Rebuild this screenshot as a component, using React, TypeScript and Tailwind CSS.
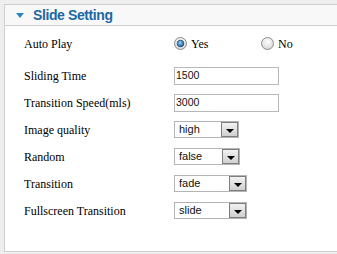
import React from "react";

const serif = { fontFamily: '"Liberation Serif", "Times New Roman", serif' };
const sans = { fontFamily: '"Liberation Sans", Arial, sans-serif' };

function Radio({ checked }: { checked?: boolean }) {
  return (
    <svg width="13" height="13" viewBox="0 0 13 13" className="shrink-0">
      <defs>
        <radialGradient id="ring" cx="50%" cy="35%" r="70%">
          <stop offset="0%" stopColor="#ffffff" />
          <stop offset="100%" stopColor="#d2d2d2" />
        </radialGradient>
        <radialGradient id="dot" cx="40%" cy="35%" r="70%">
          <stop offset="0%" stopColor="#8fd0f5" />
          <stop offset="100%" stopColor="#1a5d98" />
        </radialGradient>
      </defs>
      <circle cx="6.5" cy="6.5" r="6" fill="url(#ring)" stroke="#8c8c8c" />
      {checked && <circle cx="6.5" cy="6.5" r="3.3" fill="url(#dot)" stroke="#1f3f66" strokeWidth="0.8" />}
    </svg>
  );
}

function TextBox({ value }: { value: string }) {
  return (
    <div
      className="w-[105px] h-[18px] border border-[#b8b8b8] bg-white flex items-center pl-[1px] text-[10.5px] text-[#111]"
      style={sans}
    >
      {value}
    </div>
  );
}

function Select({ value, width }: { value: string; width: string }) {
  return (
    <div
      className={`${width} h-[17px] border border-[#b4b4b4] bg-white flex items-stretch text-[11px] text-[#111]`}
      style={sans}
    >
      <div className="flex-1 flex items-center pl-[4px]">{value}</div>
      <div className="w-[17px] border border-[#7e7e7e] bg-gradient-to-b from-[#f2f2f2] to-[#d0d0d0] flex items-end justify-center pb-[3px]">
        <div className="w-0 h-0 border-l-[4px] border-r-[4px] border-t-[4px] border-l-transparent border-r-transparent border-t-black" />
      </div>
    </div>
  );
}

function Row({ label, children, first }: { label: string; children: React.ReactNode; first?: boolean }) {
  return (
    <div className={`flex items-center h-[27px] ${first ? "mb-[5px]" : ""}`}>
      <div className="w-[150px] text-[12px] text-black" style={serif}>
        {label}
      </div>
      <div className="flex items-center">{children}</div>
    </div>
  );
}

export default function App() {
  return (
    <div className="w-[337px] h-[254px] bg-[#eeeeee] pt-[4px] pl-[4px] overflow-hidden">
      <div className="h-[248px] bg-white border-l border-t border-b border-[#cfcfcf]">
        <div className="h-[21px] bg-[#f8f8f8] border-b border-[#cfcfcf] flex items-center pl-[11px]">
          <div className="w-0 h-0 border-l-[4px] border-r-[4px] border-t-[5px] border-l-transparent border-r-transparent border-t-[#2a86c2] mr-[9px] mt-[1px]" />
          <span className="text-[14px] font-bold tracking-[-0.4px] text-[#1d68a3]" style={sans}>
            Slide Setting
          </span>
        </div>
        <div className="pl-[19px] pt-[4px]">
          <Row label="Auto Play" first>
            <div className="flex items-center w-[87px]">
              <Radio checked />
              <span className="ml-[4px] text-[12px]" style={serif}>Yes</span>
            </div>
            <div className="flex items-center">
              <Radio />
              <span className="ml-[4px] text-[12px]" style={serif}>No</span>
            </div>
          </Row>
          <Row label="Sliding Time">
            <TextBox value="1500" />
          </Row>
          <Row label="Transition Speed(mls)">
            <TextBox value="3000" />
          </Row>
          <Row label="Image quality">
            <Select value="high" width="w-[65px]" />
          </Row>
          <Row label="Random">
            <Select value="false" width="w-[66px]" />
          </Row>
          <Row label="Transition">
            <Select value="fade" width="w-[73px]" />
          </Row>
          <Row label="Fullscreen Transition">
            <Select value="slide" width="w-[73px]" />
          </Row>
        </div>
      </div>
    </div>
  );
}
